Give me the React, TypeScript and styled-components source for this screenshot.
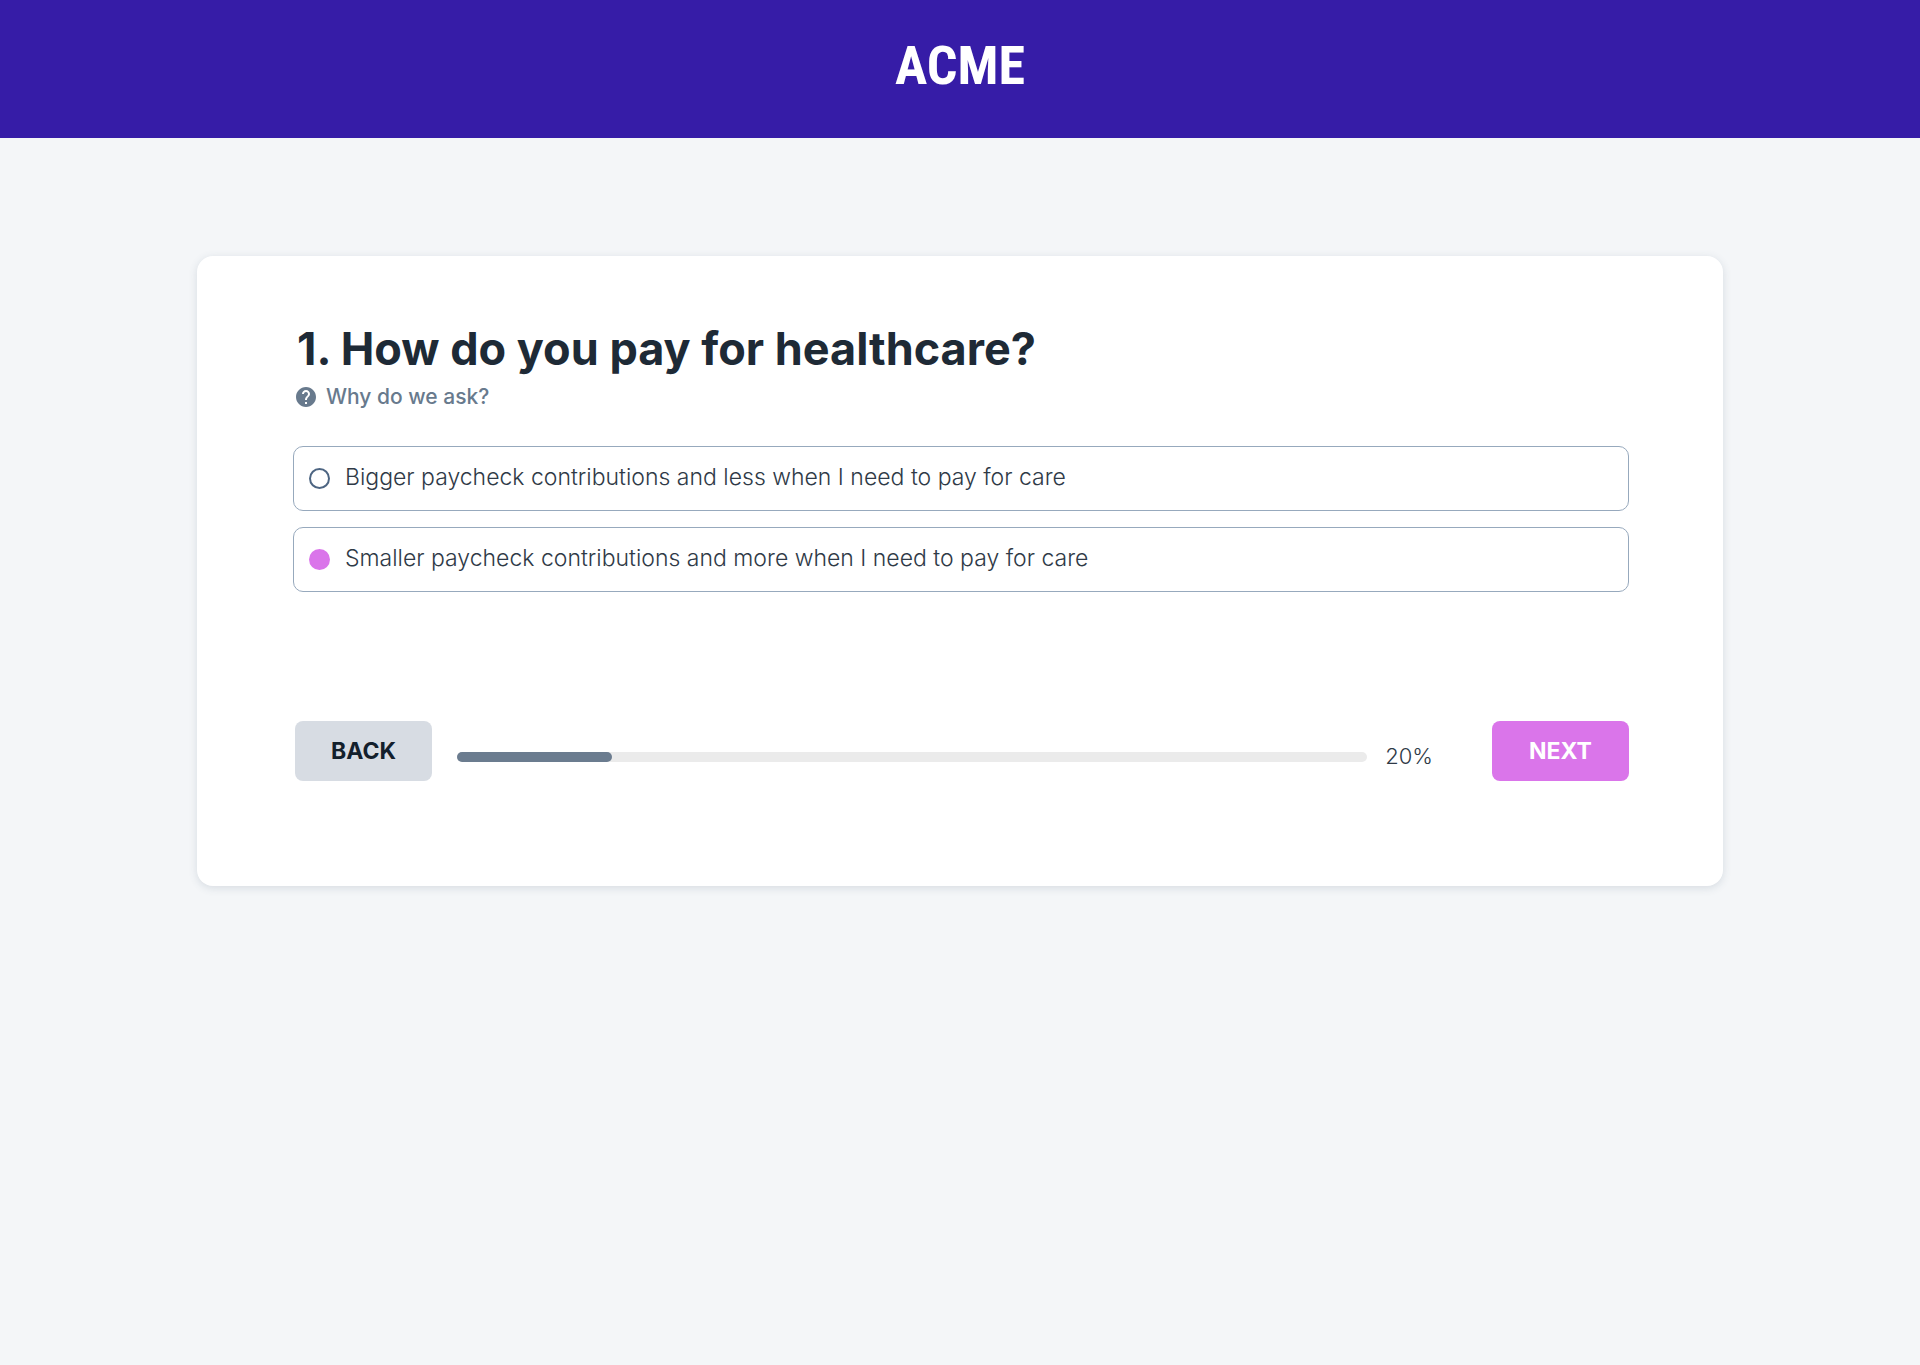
import React, { useState } from "react";
import styled, { createGlobalStyle } from "styled-components";
import { MdHelp } from "react-icons/md";

const GlobalStyle = createGlobalStyle`
  *, *::before, *::after { box-sizing: border-box; }
  body {
    margin: 0;
    background: #f4f6f8;
    color: #1f2933;
    font-family: Inter, "Open Sans", sans-serif;
  }
`;

const Header = styled.header`
  display: flex;
  justify-content: center;
  padding: 32px 24px 38px;
  background: #361ca7;
`;

const Logo = styled.a`
  color: #ffffff;
  font-family: "Roboto Condensed", Roboto, sans-serif;
  font-size: 54px;
  font-weight: 700;
  line-height: 68px;
  text-decoration: none;
`;

const Main = styled.main`
  padding: 118px 24px;
`;

const Card = styled.form`
  max-width: 1526px;
  margin: 0 auto;
  padding: 67px 94px 105px 96px;
  border-radius: 16px;
  background: #ffffff;
  box-shadow: 0 2px 8px rgba(62, 84, 110, 0.16);
`;

const Intro = styled.div`
  padding-left: 1px;
`;

const Question = styled.h1`
  margin: 0;
  padding-left: 3px;
  color: #1e2a36;
  font-size: 45px;
  font-weight: 700;
  line-height: 52px;
`;

const WhyLink = styled.a`
  display: inline-flex;
  align-items: center;
  gap: 8px;
  margin-top: 10px;
  color: #687a8d;
  font-size: 21px;
  font-weight: 500;
  line-height: 24px;
  text-decoration: none;
  vertical-align: top;
`;

const Options = styled.fieldset`
  display: grid;
  gap: 16px;
  min-width: 0;
  margin: 37px 0 0;
  padding: 0;
  border: 0;
`;

const Option = styled.label`
  display: flex;
  align-items: center;
  gap: 15px;
  padding: 15px;
  border: 1px solid #97a9bd;
  border-radius: 10px;
  cursor: pointer;
`;

const OptionText = styled.span`
  padding-bottom: 2px;
  color: #2f3a47;
  font-size: 23px;
  font-weight: 300;
  line-height: 31px;
`;

const Radio = styled.input`
  flex: none;
  appearance: none;
  width: 21px;
  height: 21px;
  margin: 0;
  border: 2px solid #4d6582;
  border-radius: 50%;
  background: #ffffff;

  &:checked {
    border-color: #da75ea;
    background: #da75ea;
  }
`;

const Actions = styled.div`
  display: flex;
  align-items: center;
  margin-top: 129px;
  padding-left: 2px;
`;

const Button = styled.button<{ $primary?: boolean }>`
  flex: none;
  width: 137px;
  height: 60px;
  padding: 0;
  border: 0;
  border-radius: 8px;
  background: ${(p) => (p.$primary ? "#da75ea" : "#d7dce3")};
  color: ${(p) => (p.$primary ? "#ffffff" : "#13202c")};
  font-family: inherit;
  font-size: 23px;
  font-weight: 700;
  cursor: pointer;
`;

const Progress = styled.div`
  display: flex;
  flex: 1;
  align-items: center;
  gap: 18px;
  padding: 11px 59px 0 25px;
`;

const Track = styled.div`
  flex: 1;
  height: 10px;
  border-radius: 5px;
  background: #ebebeb;
`;

const Fill = styled.div`
  height: 100%;
  border-radius: 5px;
  background: #6b7c8f;
`;

const Percent = styled.span`
  color: #2f3a47;
  font-size: 22px;
  font-weight: 300;
  line-height: 31px;
`;

const options = [
  "Bigger paycheck contributions and less when I need to pay for care",
  "Smaller paycheck contributions and more when I need to pay for care",
];

export default function App() {
  const [choice, setChoice] = useState(1);

  return (
    <>
      <GlobalStyle />
      <Header>
        <Logo href="#">ACME</Logo>
      </Header>
      <Main>
        <Card onSubmit={(e) => e.preventDefault()}>
          <Intro>
            <Question id="question">1. How do you pay for healthcare?</Question>
            <WhyLink href="#">
              <MdHelp size={24} aria-hidden="true" />
              Why do we ask?
            </WhyLink>
          </Intro>
          <Options aria-labelledby="question">
            {options.map((text, i) => (
              <Option key={text} htmlFor={`option-${i}`}>
                <Radio
                  type="radio"
                  id={`option-${i}`}
                  name="payment"
                  checked={choice === i}
                  onChange={() => setChoice(i)}
                />
                <OptionText>{text}</OptionText>
              </Option>
            ))}
          </Options>
          <Actions>
            <Button type="button">BACK</Button>
            <Progress>
              <Track
                role="progressbar"
                aria-label="Progress"
                aria-valuenow={20}
                aria-valuemin={0}
                aria-valuemax={100}
              >
                <Fill style={{ width: "17%" }} />
              </Track>
              <Percent>20%</Percent>
            </Progress>
            <Button type="submit" $primary>
              NEXT
            </Button>
          </Actions>
        </Card>
      </Main>
    </>
  );
}
